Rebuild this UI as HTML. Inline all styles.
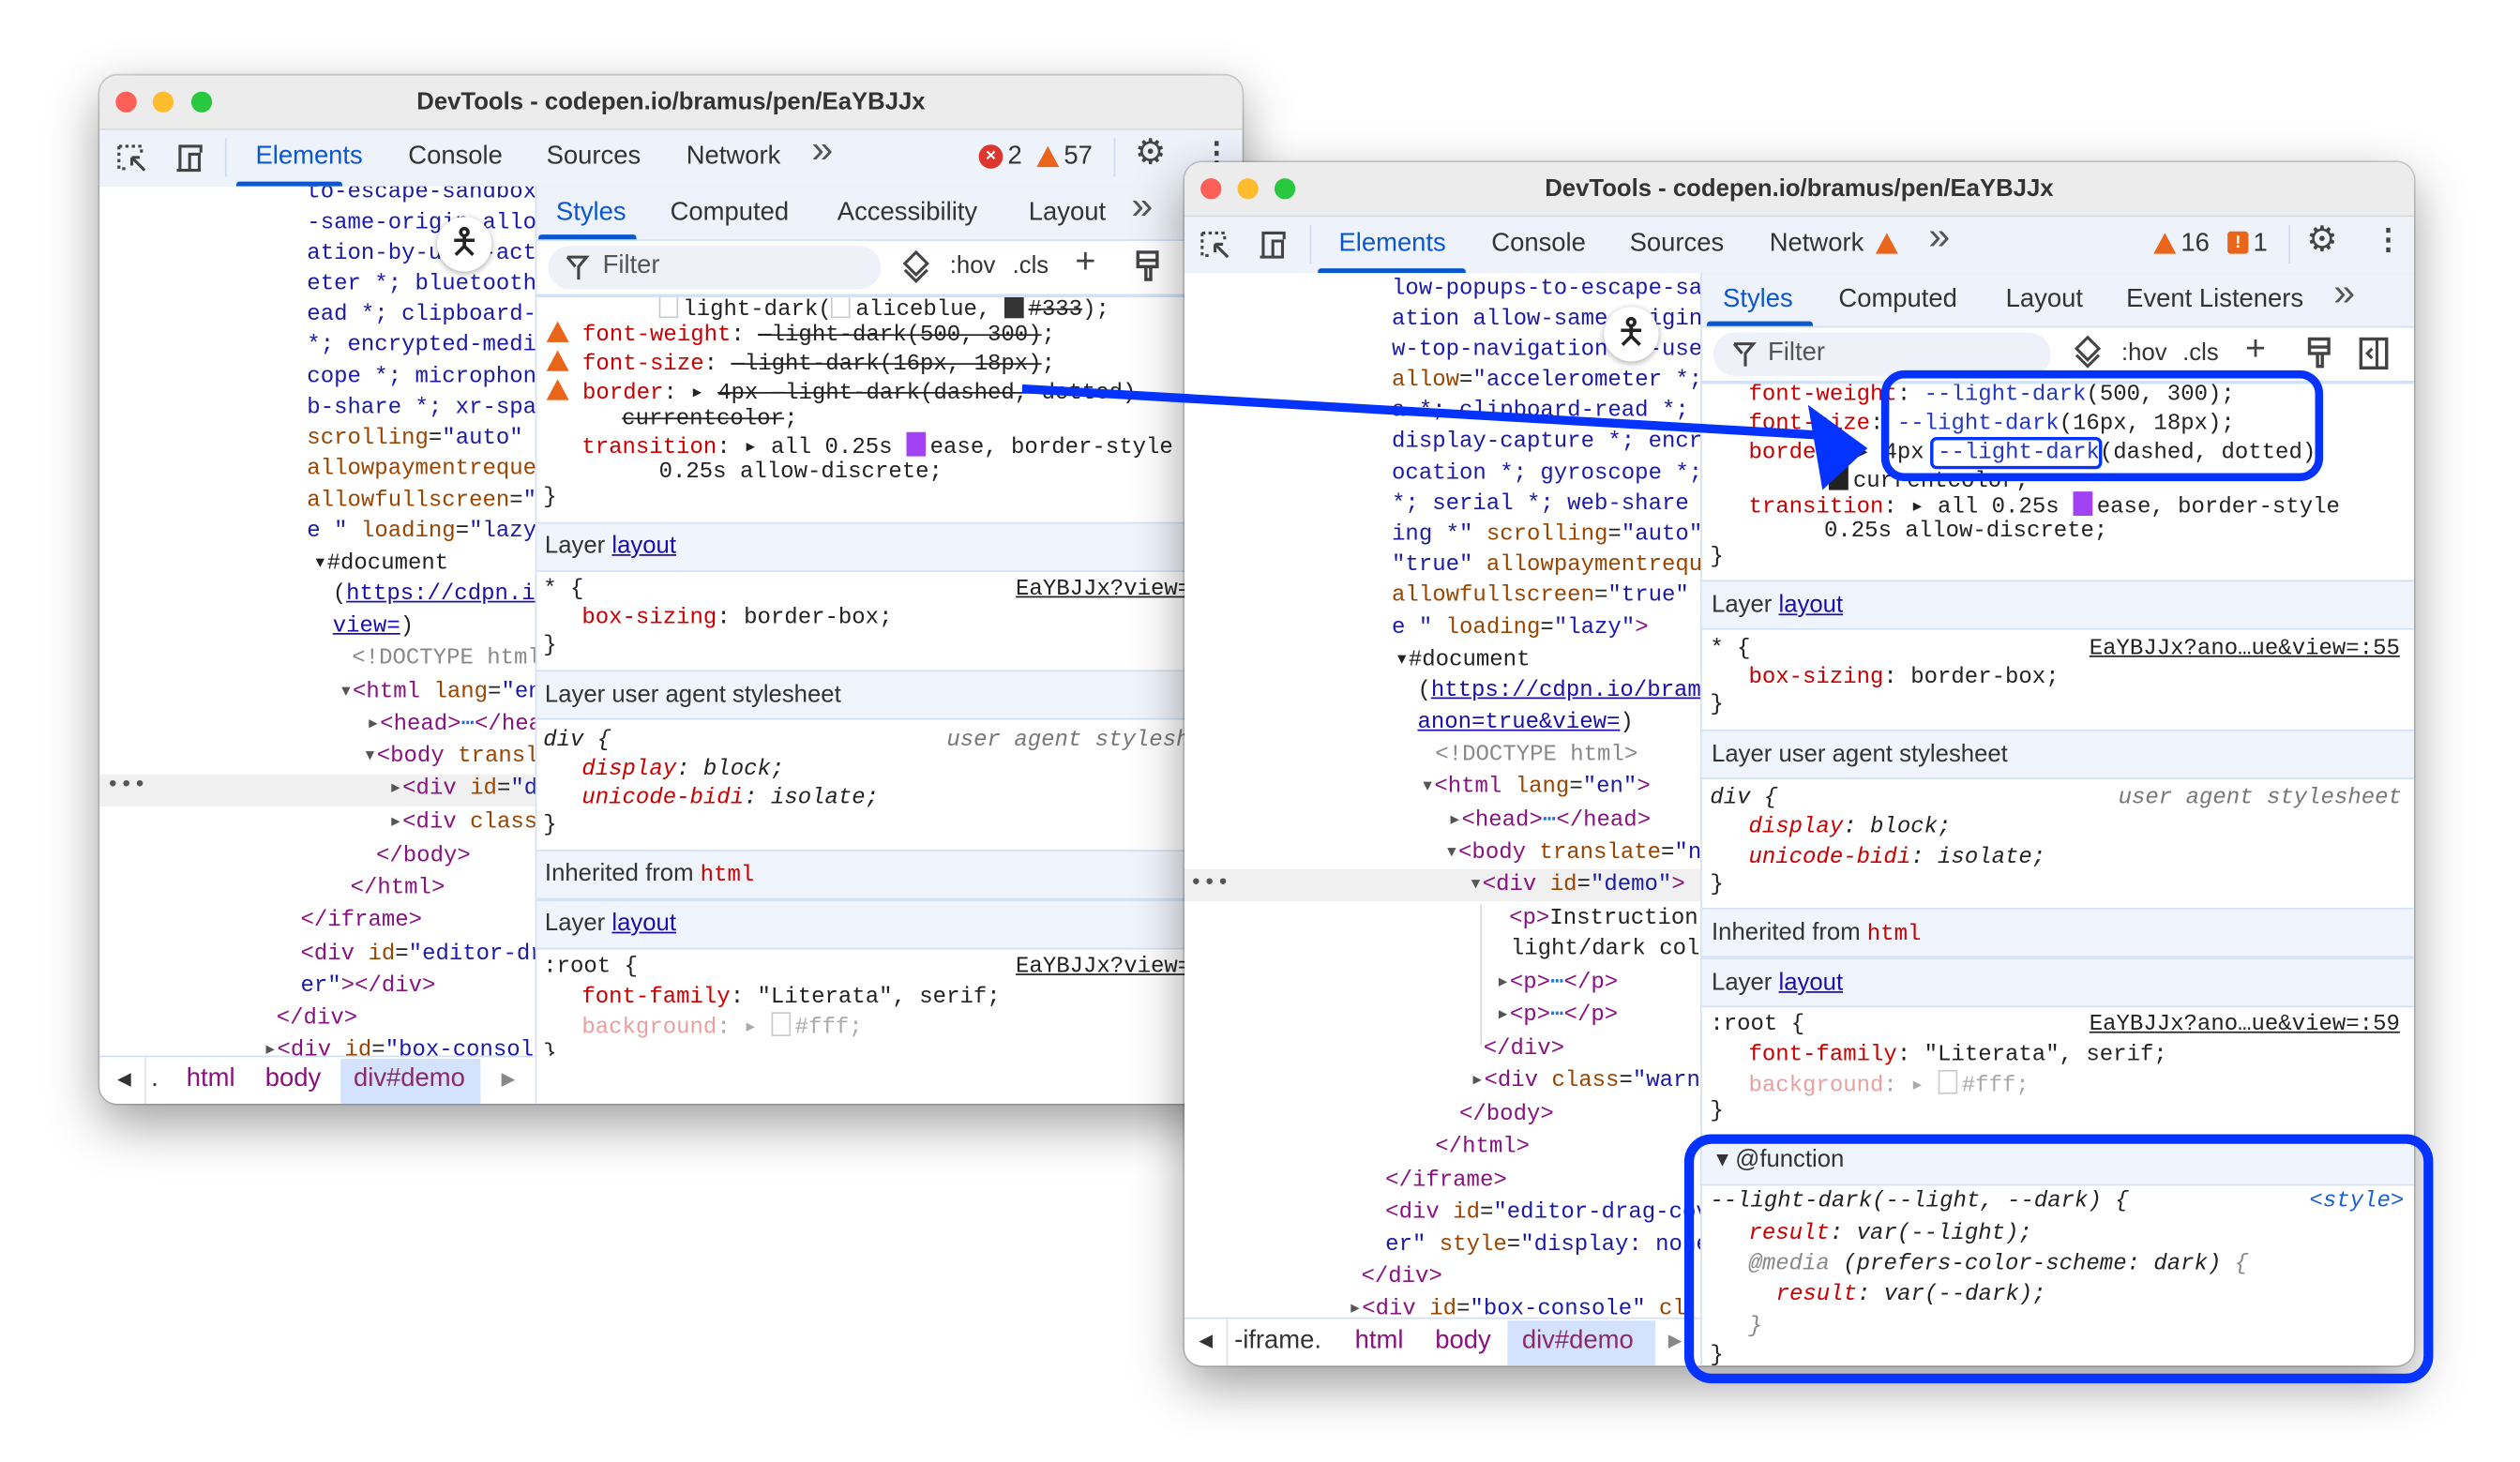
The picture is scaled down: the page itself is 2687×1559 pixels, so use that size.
<!DOCTYPE html>
<html><head><meta charset="utf-8">
<style>
html,body{margin:0;padding:0;background:#fff;overflow:hidden}
body{width:2687px;height:1559px;position:relative}
#s{position:absolute;left:0;top:0;width:1568px;height:910px;transform:scale(1.71365,1.7132);transform-origin:0 0}
.win{position:absolute;border-radius:11px;background:#fff;box-shadow:0 12px 32px rgba(0,0,0,.38),0 0 0 1px rgba(0,0,0,.18);overflow:hidden}
.c{position:absolute;overflow:hidden}
.i{position:absolute}
.a{position:absolute;white-space:pre}
.m{position:absolute;white-space:pre;font:14px/18px "Liberation Mono",monospace;color:#222}
.u{position:absolute;white-space:pre;font:16px/20px "Liberation Sans",sans-serif;color:#333}
.tg{color:#881280}.an{color:#994500}.av{color:#1a1aa6}.pn{color:#c80000}.lk{color:#1a0dab;text-decoration:underline}
.vr{color:#2338c4}
.st{text-decoration:line-through}
.it{font-style:italic}
.hd{position:absolute;background:#f0f4fc;border-top:1.5px solid #d3e1f7;border-bottom:1.5px solid #d3e1f7}
.sw{display:inline-block;width:10px;height:13px;border:1px solid #ccc;vertical-align:-2px;margin-right:3px;background:#fff}
.tb{position:absolute;background:#eef2fa;border-bottom:1.5px solid #d3e1f7}
.title{position:absolute;background:#ececec;border-bottom:1px solid #d8d8d8;font:bold 15px/33px "Liberation Sans",sans-serif;color:#333;text-align:center}
.dot{position:absolute;width:13px;height:13px;border-radius:50%}
.warn{display:inline-block;width:0;height:0;border-left:7px solid transparent;border-right:7px solid transparent;border-bottom:13px solid #e8651a;vertical-align:-1px}
.chev{font-size:24px!important;color:#555!important}
</style></head><body><div id="s">

<!-- ============ WINDOW 1 ============ -->
<div class="win" style="left:62px;top:47px;width:711px;height:640px">
 <div class="i" style="left:-62px;top:-47px;width:1568px;height:910px">
  <div class="title" style="left:62px;top:47px;width:711px;height:33px">DevTools - codepen.io/bramus/pen/EaYBJJx</div>
  <div class="dot" style="left:72px;top:57px;background:#fe5f57"></div>
  <div class="dot" style="left:95px;top:57px;background:#febc2e"></div>
  <div class="dot" style="left:119px;top:57px;background:#28c840"></div>
  <div class="tb" style="left:62px;top:81px;width:711px;height:35px"></div>
  <svg class="a" style="left:72px;top:88px" width="60" height="22" viewBox="0 0 60 22"><g fill="none" stroke="#444" stroke-width="1.8"><path d="M2 3h14v5M2 3v14h6" stroke-dasharray="2 2"/><path d="M10 10l8 8M10 10h5M10 10v5"/><path d="M38 18h14M40 18V3h13v4M46 8h6v10h-6z"/></g></svg>
  <div class="a" style="left:140px;top:86px;width:1px;height:24px;background:#cfdcf2"></div>
  <div class="u" style="left:159px;top:88px;color:#0b57d0">Elements</div>
  <div class="a" style="left:147px;top:113px;width:66px;height:3px;background:#0b57d0;border-radius:2px 2px 0 0"></div>
  <div class="u" style="left:254px;top:88px">Console</div>
  <div class="u" style="left:340px;top:88px">Sources</div>
  <div class="u" style="left:427px;top:88px">Network</div>
  <div class="u chev" style="left:505px;top:84px">»</div>
  <div class="a" style="left:609px;top:90px;width:15px;height:15px;border-radius:50%;background:#dc362e;color:#fff;font:bold 11px/15px 'Liberation Sans';text-align:center">×</div>
  <div class="u" style="left:627px;top:88px">2</div>
  <div class="a" style="left:645px;top:90px"><span class="warn"></span></div>
  <div class="u" style="left:662px;top:88px">57</div>
  <div class="a" style="left:693px;top:86px;width:1px;height:24px;background:#cfdcf2"></div>
  <div class="u" style="left:706px;top:85px;font-size:22px;color:#444">⚙</div>
  <div class="u" style="left:748px;top:85px;font-size:18px;color:#444;font-weight:bold">⋮</div>

  <!-- DOM pane -->
  <div class="c" style="left:62px;top:116px;width:271px;height:541px;background:#fff">
   <div class="i" style="left:-62px;top:-116px">
    <div class="a" style="left:62px;top:482px;width:271px;height:20px;background:#f0f0f0"></div>
    <div class="m" style="left:66px;top:480px;color:#555">•••</div>
    <div class="m av" style="left:191px;top:111px">to-escape-sandbox allow</div>
    <div class="m av" style="left:191px;top:130px">-same-origin allow-top</div>
    <div class="m av" style="left:191px;top:149px">ation-by-user-activation</div>
    <div class="m av" style="left:191px;top:168px">eter *; bluetooth *;</div>
    <div class="m av" style="left:191px;top:187px">ead *; clipboard-write</div>
    <div class="m av" style="left:191px;top:206px">*; encrypted-media *;</div>
    <div class="m av" style="left:191px;top:226px">cope *; microphone *;</div>
    <div class="m av" style="left:191px;top:245px">b-share *; xr-spatial</div>
    <div class="m" style="left:191px;top:264px"><span class="an">scrolling</span>=<span class="av">"auto"</span></div>
    <div class="m an" style="left:191px;top:283px">allowpaymentrequest</div>
    <div class="m" style="left:191px;top:303px"><span class="an">allowfullscreen</span>=<span class="av">"true"</span></div>
    <div class="m" style="left:191px;top:322px"><span class="av">e "</span> <span class="an">loading</span>=<span class="av">"lazy"</span></div>
    <div class="m" style="left:195px;top:342px">▾#document</div>
    <div class="m" style="left:207px;top:361px">(<span class="lk">https://cdpn.io/bramus</span></div>
    <div class="m" style="left:207px;top:381px"><span class="lk">view=</span>)</div>
    <div class="m" style="left:219px;top:401px;color:#888">&lt;!DOCTYPE html&gt;</div>
    <div class="m" style="left:211px;top:422px"><span style="color:#555">▾</span><span class="tg">&lt;html</span> <span class="an">lang</span>=<span class="av">"en"</span></div>
    <div class="m" style="left:228px;top:442px"><span style="color:#555">▸</span><span class="tg">&lt;head&gt;</span><span style="color:#1a73e8">⋯</span><span class="tg">&lt;/head&gt;</span></div>
    <div class="m" style="left:226px;top:462px"><span style="color:#555">▾</span><span class="tg">&lt;body</span> <span class="an">translate</span></div>
    <div class="m" style="left:242px;top:482px"><span style="color:#555">▸</span><span class="tg">&lt;div</span> <span class="an">id</span>=<span class="av">"demo"</span></div>
    <div class="m" style="left:242px;top:503px"><span style="color:#555">▸</span><span class="tg">&lt;div</span> <span class="an">class</span></div>
    <div class="m tg" style="left:234px;top:524px">&lt;/body&gt;</div>
    <div class="m tg" style="left:218px;top:544px">&lt;/html&gt;</div>
    <div class="m tg" style="left:187px;top:564px">&lt;/iframe&gt;</div>
    <div class="m" style="left:187px;top:585px"><span class="tg">&lt;div</span> <span class="an">id</span>=<span class="av">"editor-drag</span></div>
    <div class="m" style="left:187px;top:605px"><span class="av">er"</span><span class="tg">&gt;&lt;/div&gt;</span></div>
    <div class="m tg" style="left:172px;top:625px">&lt;/div&gt;</div>
    <div class="m" style="left:164px;top:645px"><span style="color:#555">▸</span><span class="tg">&lt;div</span> <span class="an">id</span>=<span class="av">"box-console"</span></div>
    <div class="a" style="left:272px;top:135px;width:34px;height:34px;border-radius:50%;background:#fff;box-shadow:0 1px 4px rgba(0,0,0,.35);font:22px/34px 'DejaVu Sans';text-align:center;color:#222">🯅</div>
   </div>
  </div>
  <div class="a" style="left:333px;top:116px;width:1px;height:571px;background:#d3e1f7"></div>
  <!-- breadcrumb -->
  <div class="a" style="left:62px;top:657px;width:271px;height:30px;background:#fff;border-top:1.5px solid #d3e1f7"></div>
  <div class="u" style="left:73px;top:662px;font-size:11px;color:#333">◀</div>
  <div class="a" style="left:90px;top:658px;width:1px;height:29px;background:#e3e3e3"></div>
  <div class="u" style="left:94px;top:662px">.</div>
  <div class="u tg" style="left:116px;top:662px">html</div>
  <div class="u tg" style="left:165px;top:662px">body</div>
  <div class="a" style="left:212px;top:659px;width:87px;height:28px;background:#d3e3fd"></div>
  <div class="u" style="left:220px;top:662px;color:#8a2a6a">div#demo</div>
  <div class="u" style="left:312px;top:662px;font-size:11px;color:#888">▶</div>

  <!-- Styles pane -->
  <div class="tb" style="left:334px;top:116px;width:439px;height:33px"></div>
  <div class="u" style="left:346px;top:123px;color:#0b57d0">Styles</div>
  <div class="a" style="left:335px;top:146px;width:61px;height:3px;background:#0b57d0;border-radius:2px 2px 0 0"></div>
  <div class="u" style="left:417px;top:123px">Computed</div>
  <div class="u" style="left:521px;top:123px">Accessibility</div>
  <div class="u" style="left:640px;top:123px">Layout</div>
  <div class="u chev" style="left:704px;top:119px">»</div>
  <div class="a" style="left:341px;top:153px;width:207px;height:27px;border-radius:14px;background:#eef1f8"></div>
  <svg class="a" style="left:351px;top:158px" width="16" height="18"><path d="M2 2h12l-5 6v8M7 8L2 2" fill="none" stroke="#444" stroke-width="1.8"/></svg>
  <div class="u" style="left:375px;top:156px;color:#555">Filter</div>
  <svg class="a" style="left:560px;top:155px" width="20" height="22"><path d="M10 2l7 7-7 7-7-7z M3 13l7 7 7-7" fill="none" stroke="#444" stroke-width="1.8"/></svg>
  <div class="u" style="left:591px;top:156px;font-size:15px">:hov</div>
  <div class="u" style="left:630px;top:156px;font-size:15px">.cls</div>
  <div class="u" style="left:669px;top:153px;font-size:22px;color:#444">+</div>
  <svg class="a" style="left:705px;top:155px" width="18" height="22"><path d="M3 2h12v9H3z M8 11v8h3v-8" fill="none" stroke="#444" stroke-width="2"/><path d="M3 7h12" stroke="#444" stroke-width="2"/></svg>
  <div class="a" style="left:334px;top:183px;width:439px;height:1.5px;background:#d3e1f7"></div>

  <div class="c" style="left:334px;top:185px;width:439px;height:472px">
   <div class="i" style="left:-334px;top:-185px">
    <div class="m" style="left:410px;top:183px"><span class="sw"></span>light-dark(<span class="sw"></span>aliceblue, <span class="sw" style="background:#333;border-color:#333"></span><span class="st">#333</span>);</div>
    <div class="m" style="left:340px;top:200px"><span class="warn"></span> <span class="pn">font-weight</span>: <span class="st">—light-dark(500, 300)</span>;</div>
    <div class="m" style="left:340px;top:218px"><span class="warn"></span> <span class="pn">font-size</span>: <span class="st">—light-dark(16px, 18px)</span>;</div>
    <div class="m" style="left:340px;top:236px"><span class="warn"></span> <span class="pn">border</span>: ▸ <span class="st">4px —light-dark(dashed, dotted)</span></div>
    <div class="m st" style="left:387px;top:252px">currentcolor</div>
    <div class="m" style="left:488px;top:252px">;</div>
    <div class="m" style="left:362px;top:269px"><span class="pn">transition</span>: ▸ all 0.25s <span class="sw" style="background:#a142f4;border-color:#a142f4"></span>ease, border-style</div>
    <div class="m" style="left:410px;top:285px">0.25s allow-discrete;</div>
    <div class="m" style="left:338px;top:301px">}</div>
    <div class="hd" style="left:334px;top:325px;width:439px;height:29px"></div>
    <div class="u" style="left:339px;top:330px;font-size:15px">Layer <span class="lk">layout</span></div>
    <div class="m" style="left:338px;top:358px">* {</div>
    <div class="m" style="left:632px;top:358px;text-decoration:underline">EaYBJJx?view=:55</div>
    <div class="m" style="left:362px;top:376px"><span class="pn">box-sizing</span>: border-box;</div>
    <div class="m" style="left:338px;top:393px">}</div>
    <div class="hd" style="left:334px;top:417px;width:439px;height:29px"></div>
    <div class="u" style="left:339px;top:423px;font-size:15px">Layer user agent stylesheet</div>
    <div class="m it" style="left:338px;top:452px">div {</div>
    <div class="m it" style="left:589px;top:452px;color:#777">user agent stylesheet</div>
    <div class="m it" style="left:362px;top:470px"><span class="pn">display</span>: block;</div>
    <div class="m it" style="left:362px;top:488px"><span class="pn">unicode-bidi</span>: isolate;</div>
    <div class="m" style="left:338px;top:505px">}</div>
    <div class="hd" style="left:334px;top:529px;width:439px;height:29px"></div>
    <div class="u" style="left:339px;top:534px;font-size:15px">Inherited from <span style="font-family:'Liberation Mono';font-size:14px;color:#c80000">html</span></div>
    <div class="hd" style="left:334px;top:560px;width:439px;height:29px"></div>
    <div class="u" style="left:339px;top:565px;font-size:15px">Layer <span class="lk">layout</span></div>
    <div class="m" style="left:338px;top:593px">:root {</div>
    <div class="m" style="left:632px;top:593px;text-decoration:underline">EaYBJJx?view=:59</div>
    <div class="m" style="left:362px;top:612px"><span class="pn">font-family</span>: "Literata", serif;</div>
    <div class="m" style="left:362px;top:630px;color:#aaa"><span style="color:#e8a0a0">background</span>: ▸ <span class="sw"></span>#fff;</div>
    <div class="m" style="left:338px;top:647px">}</div>
    <div class="hd" style="left:334px;top:670px;width:439px;height:29px"></div>
   </div>
  </div>
 </div>
</div>

<!-- ============ WINDOW 2 ============ -->
<div class="win" style="left:737px;top:101px;width:765px;height:749px">
 <div class="i" style="left:-737px;top:-101px;width:1568px;height:910px">
  <div class="title" style="left:737px;top:101px;width:765px;height:33px">DevTools - codepen.io/bramus/pen/EaYBJJx</div>
  <div class="dot" style="left:747px;top:111px;background:#fe5f57"></div>
  <div class="dot" style="left:770px;top:111px;background:#febc2e"></div>
  <div class="dot" style="left:793px;top:111px;background:#28c840"></div>
  <div class="tb" style="left:737px;top:135px;width:765px;height:35px"></div>
  <svg class="a" style="left:746px;top:142px" width="60" height="22" viewBox="0 0 60 22"><g fill="none" stroke="#444" stroke-width="1.8"><path d="M2 3h14v5M2 3v14h6" stroke-dasharray="2 2"/><path d="M10 10l8 8M10 10h5M10 10v5"/><path d="M38 18h14M40 18V3h13v4M46 8h6v10h-6z"/></g></svg>
  <div class="a" style="left:815px;top:140px;width:1px;height:24px;background:#cfdcf2"></div>
  <div class="u" style="left:833px;top:142px;color:#0b57d0">Elements</div>
  <div class="a" style="left:820px;top:167px;width:92px;height:3px;background:#0b57d0;border-radius:2px 2px 0 0"></div>
  <div class="u" style="left:928px;top:142px">Console</div>
  <div class="u" style="left:1014px;top:142px">Sources</div>
  <div class="u" style="left:1101px;top:142px">Network</div>
  <div class="a" style="left:1167px;top:144px"><span class="warn"></span></div>
  <div class="u chev" style="left:1200px;top:138px">»</div>
  <div class="a" style="left:1340px;top:144px"><span class="warn"></span></div>
  <div class="u" style="left:1357px;top:142px">16</div>
  <div class="a" style="left:1386px;top:144px;width:13px;height:14px;background:#e8651a;color:#fff;font:bold 11px/14px 'Liberation Sans';text-align:center;border-radius:2px">!</div>
  <div class="u" style="left:1402px;top:142px">1</div>
  <div class="a" style="left:1424px;top:140px;width:1px;height:24px;background:#cfdcf2"></div>
  <div class="u" style="left:1435px;top:139px;font-size:22px;color:#444">⚙</div>
  <div class="u" style="left:1477px;top:139px;font-size:18px;color:#444;font-weight:bold">⋮</div>

  <div class="c" style="left:737px;top:170px;width:321px;height:650px;background:#fff">
   <div class="i" style="left:-737px;top:-170px">
    <div class="a" style="left:737px;top:541px;width:321px;height:20px;background:#f0f0f0"></div>
    <div class="m" style="left:740px;top:541px;color:#555">•••</div>
    <div class="a" style="left:921px;top:563px;width:1px;height:88px;background:#ddd"></div>
    <div class="m av" style="left:866px;top:171px">low-popups-to-escape-sandbox</div>
    <div class="m av" style="left:866px;top:190px">ation allow-same-origin</div>
    <div class="m av" style="left:866px;top:209px">w-top-navigation-by-user</div>
    <div class="m" style="left:866px;top:228px"><span class="an">allow</span>=<span class="av">"accelerometer *;</span></div>
    <div class="m av" style="left:866px;top:247px">a *; clipboard-read *;</div>
    <div class="m av" style="left:866px;top:266px">display-capture *; encr</div>
    <div class="m av" style="left:866px;top:286px">ocation *; gyroscope *;</div>
    <div class="m av" style="left:866px;top:305px">*; serial *; web-share</div>
    <div class="m" style="left:866px;top:324px"><span class="av">ing *"</span> <span class="an">scrolling</span>=<span class="av">"auto"</span></div>
    <div class="m" style="left:866px;top:343px"><span class="av">"true"</span> <span class="an">allowpaymentrequest</span></div>
    <div class="m" style="left:866px;top:362px"><span class="an">allowfullscreen</span>=<span class="av">"true"</span></div>
    <div class="m" style="left:866px;top:382px"><span class="av">e "</span> <span class="an">loading</span>=<span class="av">"lazy"</span><span class="tg">&gt;</span></div>
    <div class="m" style="left:868px;top:402px">▾#document</div>
    <div class="m" style="left:882px;top:421px">(<span class="lk">https://cdpn.io/bramus</span></div>
    <div class="m" style="left:882px;top:441px"><span class="lk">anon=true&amp;view=</span>)</div>
    <div class="m" style="left:893px;top:461px;color:#888">&lt;!DOCTYPE html&gt;</div>
    <div class="m" style="left:884px;top:481px"><span style="color:#555">▾</span><span class="tg">&lt;html</span> <span class="an">lang</span>=<span class="av">"en"</span><span class="tg">&gt;</span></div>
    <div class="m" style="left:901px;top:502px"><span style="color:#555">▸</span><span class="tg">&lt;head&gt;</span><span style="color:#1a73e8">⋯</span><span class="tg">&lt;/head&gt;</span></div>
    <div class="m" style="left:899px;top:522px"><span style="color:#555">▾</span><span class="tg">&lt;body</span> <span class="an">translate</span>=<span class="av">"no"</span></div>
    <div class="m" style="left:914px;top:542px"><span style="color:#555">▾</span><span class="tg">&lt;div</span> <span class="an">id</span>=<span class="av">"demo"</span><span class="tg">&gt;</span></div>
    <div class="m" style="left:939px;top:563px"><span class="tg">&lt;p&gt;</span>Instructions</div>
    <div class="m" style="left:940px;top:582px">light/dark colors</div>
    <div class="m" style="left:931px;top:603px"><span style="color:#555">▸</span><span class="tg">&lt;p&gt;</span><span style="color:#1a73e8">⋯</span><span class="tg">&lt;/p&gt;</span></div>
    <div class="m" style="left:931px;top:623px"><span style="color:#555">▸</span><span class="tg">&lt;p&gt;</span><span style="color:#1a73e8">⋯</span><span class="tg">&lt;/p&gt;</span></div>
    <div class="m tg" style="left:923px;top:644px">&lt;/div&gt;</div>
    <div class="m" style="left:915px;top:664px"><span style="color:#555">▸</span><span class="tg">&lt;div</span> <span class="an">class</span>=<span class="av">"warning"</span></div>
    <div class="m tg" style="left:908px;top:685px">&lt;/body&gt;</div>
    <div class="m tg" style="left:893px;top:705px">&lt;/html&gt;</div>
    <div class="m tg" style="left:862px;top:726px">&lt;/iframe&gt;</div>
    <div class="m" style="left:862px;top:746px"><span class="tg">&lt;div</span> <span class="an">id</span>=<span class="av">"editor-drag-cover</span></div>
    <div class="m" style="left:862px;top:766px"><span class="av">er"</span> <span class="an">style</span>=<span class="av">"display: none</span></div>
    <div class="m tg" style="left:847px;top:786px">&lt;/div&gt;</div>
    <div class="m" style="left:839px;top:806px"><span style="color:#555">▸</span><span class="tg">&lt;div</span> <span class="an">id</span>=<span class="av">"box-console"</span> <span class="an">cl</span></div>
    <div class="a" style="left:998px;top:191px;width:34px;height:34px;border-radius:50%;background:#fff;box-shadow:0 1px 4px rgba(0,0,0,.35);font:22px/34px 'DejaVu Sans';text-align:center;color:#222">🯅</div>
   </div>
  </div>
  <div class="a" style="left:1058px;top:170px;width:1px;height:680px;background:#d3e1f7"></div>
  <div class="a" style="left:737px;top:820px;width:321px;height:30px;background:#fff;border-top:1.5px solid #d3e1f7"></div>
  <div class="u" style="left:746px;top:825px;font-size:11px">◀</div>
  <div class="a" style="left:763px;top:821px;width:1px;height:29px;background:#e3e3e3"></div>
  <div class="u" style="left:768px;top:825px">-iframe.</div>
  <div class="u tg" style="left:843px;top:825px">html</div>
  <div class="u tg" style="left:893px;top:825px">body</div>
  <div class="a" style="left:938px;top:822px;width:92px;height:28px;background:#d3e3fd"></div>
  <div class="u" style="left:947px;top:825px;color:#8a2a6a">div#demo</div>
  <div class="u" style="left:1038px;top:825px;font-size:11px;color:#888">▶</div>

  <div class="tb" style="left:1059px;top:170px;width:443px;height:33px"></div>
  <div class="u" style="left:1072px;top:177px;color:#0b57d0">Styles</div>
  <div class="a" style="left:1062px;top:200px;width:66px;height:3px;background:#0b57d0;border-radius:2px 2px 0 0"></div>
  <div class="u" style="left:1144px;top:177px">Computed</div>
  <div class="u" style="left:1248px;top:177px">Layout</div>
  <div class="u" style="left:1323px;top:177px">Event Listeners</div>
  <div class="u chev" style="left:1452px;top:173px">»</div>
  <div class="a" style="left:1066px;top:207px;width:210px;height:27px;border-radius:14px;background:#eef1f8"></div>
  <svg class="a" style="left:1077px;top:212px" width="16" height="18"><path d="M2 2h12l-5 6v8M7 8L2 2" fill="none" stroke="#444" stroke-width="1.8"/></svg>
  <div class="u" style="left:1100px;top:210px;color:#555">Filter</div>
  <svg class="a" style="left:1289px;top:208px" width="20" height="22"><path d="M10 2l7 7-7 7-7-7z M3 13l7 7 7-7" fill="none" stroke="#444" stroke-width="1.8"/></svg>
  <div class="u" style="left:1320px;top:210px;font-size:15px">:hov</div>
  <div class="u" style="left:1358px;top:210px;font-size:15px">.cls</div>
  <div class="u" style="left:1397px;top:207px;font-size:22px;color:#444">+</div>
  <svg class="a" style="left:1434px;top:209px" width="18" height="22"><path d="M3 2h12v9H3z M8 11v8h3v-8" fill="none" stroke="#444" stroke-width="2"/><path d="M3 7h12" stroke="#444" stroke-width="2"/></svg>
  <svg class="a" style="left:1467px;top:209px" width="20" height="22"><rect x="2" y="2" width="16" height="18" fill="none" stroke="#444" stroke-width="2"/><path d="M12 2v18M9 8l-3 3 3 3" fill="none" stroke="#444" stroke-width="1.8"/></svg>
  <div class="a" style="left:1059px;top:237px;width:443px;height:1.5px;background:#d3e1f7"></div>

  <div class="c" style="left:1059px;top:239px;width:443px;height:611px">
   <div class="i" style="left:-1059px;top:-239px">
    <div class="m" style="left:1088px;top:237px"><span class="pn">font-weight</span>: <span class="vr">--light-dark</span>(500, 300);</div>
    <div class="m" style="left:1088px;top:255px"><span class="pn">font-size</span>: <span class="vr">--light-dark</span>(16px, 18px);</div>
    <div class="m" style="left:1088px;top:273px"><span class="pn">border</span>: ▸ 4px <span class="vr">--light-dark</span>(dashed, dotted)</div>
    <div class="m" style="left:1138px;top:290px"><span class="sw" style="background:#222;border-color:#222"></span>currentcolor;</div>
    <div class="m" style="left:1088px;top:306px"><span class="pn">transition</span>: ▸ all 0.25s <span class="sw" style="background:#a142f4;border-color:#a142f4"></span>ease, border-style</div>
    <div class="m" style="left:1135px;top:322px">0.25s allow-discrete;</div>
    <div class="m" style="left:1064px;top:338px">}</div>
    <div class="hd" style="left:1059px;top:361px;width:443px;height:29px"></div>
    <div class="u" style="left:1065px;top:367px;font-size:15px">Layer <span class="lk">layout</span></div>
    <div class="m" style="left:1064px;top:395px">* {</div>
    <div class="m" style="left:1300px;top:395px;text-decoration:underline">EaYBJJx?ano…ue&amp;view=:55</div>
    <div class="m" style="left:1088px;top:413px"><span class="pn">box-sizing</span>: border-box;</div>
    <div class="m" style="left:1064px;top:430px">}</div>
    <div class="hd" style="left:1059px;top:454px;width:443px;height:29px"></div>
    <div class="u" style="left:1065px;top:460px;font-size:15px">Layer user agent stylesheet</div>
    <div class="m it" style="left:1064px;top:488px">div {</div>
    <div class="m it" style="left:1318px;top:488px;color:#777">user agent stylesheet</div>
    <div class="m it" style="left:1088px;top:506px"><span class="pn">display</span>: block;</div>
    <div class="m it" style="left:1088px;top:525px"><span class="pn">unicode-bidi</span>: isolate;</div>
    <div class="m" style="left:1064px;top:542px">}</div>
    <div class="hd" style="left:1059px;top:565px;width:443px;height:29px"></div>
    <div class="u" style="left:1065px;top:571px;font-size:15px">Inherited from <span style="font-family:'Liberation Mono';font-size:14px;color:#c80000">html</span></div>
    <div class="hd" style="left:1059px;top:596px;width:443px;height:29px"></div>
    <div class="u" style="left:1065px;top:602px;font-size:15px">Layer <span class="lk">layout</span></div>
    <div class="m" style="left:1064px;top:629px">:root {</div>
    <div class="m" style="left:1300px;top:629px;text-decoration:underline">EaYBJJx?ano…ue&amp;view=:59</div>
    <div class="m" style="left:1088px;top:648px"><span class="pn">font-family</span>: "Literata", serif;</div>
    <div class="m" style="left:1088px;top:666px;color:#aaa"><span style="color:#e8a0a0">background</span>: ▸ <span class="sw"></span>#fff;</div>
    <div class="m" style="left:1064px;top:683px">}</div>
    <div class="hd" style="left:1059px;top:707px;width:443px;height:29px"></div>
    <div class="u" style="left:1068px;top:712px;font-size:15px">▾ @function</div>
    <div class="m it" style="left:1064px;top:739px">--light-dark(--light, --dark) {</div>
    <div class="m it" style="left:1437px;top:739px;color:#1a5fd6">&lt;style&gt;</div>
    <div class="m it" style="left:1088px;top:759px"><span class="pn">result</span>: var(--light);</div>
    <div class="m it" style="left:1088px;top:778px"><span style="color:#888">@media</span> (prefers-color-scheme: dark) <span style="color:#888">{</span></div>
    <div class="m it" style="left:1105px;top:797px"><span class="pn">result</span>: var(--dark);</div>
    <div class="m it" style="left:1088px;top:817px;color:#888">}</div>
    <div class="m" style="left:1064px;top:835px">}</div>
   </div>
  </div>
 </div>
</div>

<!-- annotations -->
<svg class="a" style="left:0;top:0" width="1568" height="910" viewBox="0 0 1568 910">
 <g stroke="#0433ff" fill="none">
  <rect x="1173" y="233" width="270" height="64" rx="12" stroke-width="5"/>
  <rect x="1202" y="273" width="105" height="18" rx="3" stroke-width="2"/>
  <rect x="1051" y="709" width="460" height="149" rx="14" stroke-width="6"/>
  <path d="M636 242 L1135 271" stroke-width="5.5"/>
 </g>
 <path d="M1125 252 L1162 279 L1134 305 Z" fill="#0433ff"/>
</svg>

</div></body></html>
